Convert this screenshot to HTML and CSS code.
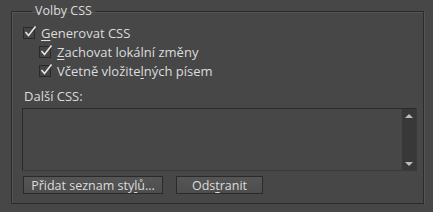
FILE: index.html
```html
<!DOCTYPE html>
<html lang="cs">
<head>
    <meta charset="UTF-8">
    <title>Volby CSS</title>
    <link rel="stylesheet" href="styles.css">
</head>
<body>
    <fieldset class="group">
        <legend>Volby CSS</legend>

        <!-- Checkboxes -->
        <label class="check">
            <span class="box"><svg width="14" height="14" viewBox="0 0 14 14"><path d="M2.5 7 L5.5 10.5 L12.5 1.5" fill="none" stroke="#e6e6e6" stroke-width="1.6"/></svg></span>
            <span><u>G</u>enerovat CSS</span>
        </label>
        <div class="sub">
            <label class="check">
                <span class="box"><svg width="14" height="14" viewBox="0 0 14 14"><path d="M2.5 7 L5.5 10.5 L12.5 1.5" fill="none" stroke="#e6e6e6" stroke-width="1.6"/></svg></span>
                <span><u>Z</u>achovat lokální změny</span>
            </label>
            <label class="check">
                <span class="box"><svg width="14" height="14" viewBox="0 0 14 14"><path d="M2.5 7 L5.5 10.5 L12.5 1.5" fill="none" stroke="#e6e6e6" stroke-width="1.6"/></svg></span>
                <span>Včetně vložite<u>l</u>ných písem</span>
            </label>
        </div>

        <!-- Extra CSS -->
        <div class="field-label">Další CSS:</div>
        <div class="textarea">
            <div class="text"></div>
            <div class="scrollbar">
                <span class="arrow up"></span>
                <span class="arrow down"></span>
            </div>
        </div>

        <div class="buttons">
            <button class="btn wide">Přidat seznam sty<u>l</u>ů...</button>
            <button class="btn">Ods<u>t</u>ranit</button>
        </div>
    </fieldset>
</body>
</html>
```

FILE: styles.css
```css
body {
    margin: 0;
    padding: 3px 0 0 11px;
    background-color: #474747;
    color: #dcdcdc;
    font-family: 'Open Sans', 'Noto Sans', sans-serif;
    font-size: 13px;
    line-height: 16px;
}

.group {
    box-sizing: border-box;
    width: 413px;
    height: 201px;
    margin: 0;
    padding: 4px 0 0 11px;
    border: 1px solid #2b2b2b;
    box-shadow: inset 1px 1px 0 #555555, 1px 1px 0 #555555;
}

.group legend {
    margin-left: 9px;
    padding: 0 3px;
    font-size: 12.5px;
}

.check {
    display: flex;
    align-items: center;
    height: 19px;
}

.box {
    box-sizing: border-box;
    width: 12px;
    height: 12px;
    margin-right: 6px;
    border: 1px solid #2a2a2a;
    background-color: #444444;
    position: relative;
}

.box svg {
    position: absolute;
    left: -1px;
    top: -3px;
}

.check u,
.btn u {
    text-decoration-thickness: 1px;
    text-underline-offset: 2px;
}

.sub {
    padding-left: 16px;
}

.field-label {
    margin-top: 8px;
    padding-left: 1px;
}

.textarea {
    box-sizing: border-box;
    display: flex;
    width: 395px;
    height: 63px;
    margin-top: 4px;
    margin-left: -1px;
    border: 1px solid #2a2a2a;
    border-right-color: #3a3a3a;
    border-bottom-color: #3a3a3a;
    background-color: #474747;
}

.text {
    flex: 1;
}

.scrollbar {
    width: 14px;
    background-color: #383838;
    display: flex;
    flex-direction: column;
    justify-content: space-between;
    align-items: center;
    padding: 5px 0 4px;
}

.arrow {
    width: 0;
    height: 0;
    border-left: 4px solid transparent;
    border-right: 4px solid transparent;
}

.arrow.up {
    border-bottom: 4px solid #bdbdbd;
}

.arrow.down {
    border-top: 4px solid #bdbdbd;
}

.buttons {
    display: flex;
    gap: 13px;
    margin-top: 5px;
}

.btn {
    box-sizing: border-box;
    height: 18px;
    width: 87px;
    padding: 0;
    border: 1px solid #2a2a2a;
    background: linear-gradient(#555555, #4d4d4d);
    color: #dcdcdc;
    font-family: inherit;
    font-size: 12.5px;
    line-height: 15px;
}

.btn.wide {
    width: 140px;
}
```
